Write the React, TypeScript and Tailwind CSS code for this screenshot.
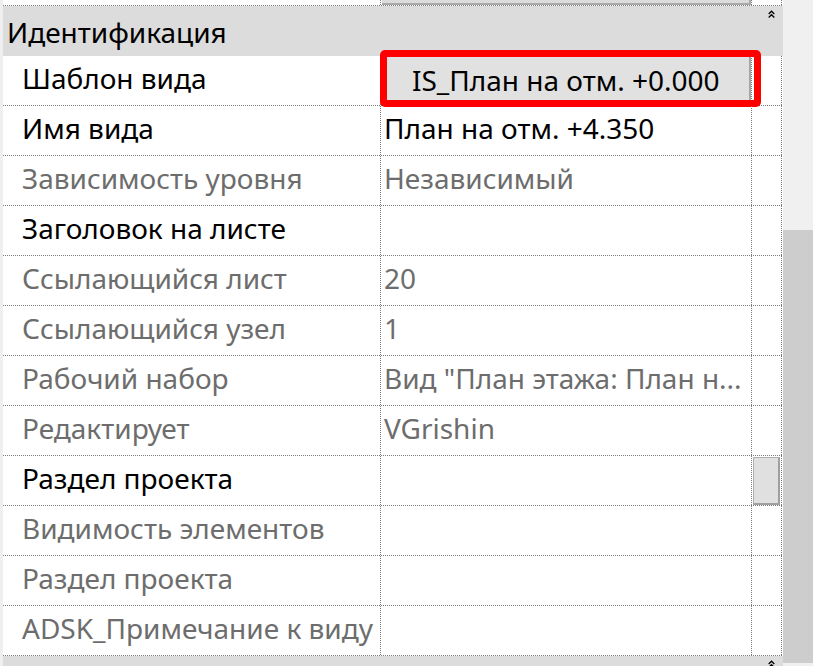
import React from 'react'

type Row = {
  label: string
  value?: string
  readOnly?: boolean
  template?: boolean
  thumb?: boolean
}

const rows: Row[] = [
  { label: 'Шаблон вида', value: 'IS_План на отм. +0.000', template: true },
  { label: 'Имя вида', value: 'План на отм. +4.350' },
  { label: 'Зависимость уровня', value: 'Независимый', readOnly: true },
  { label: 'Заголовок на листе' },
  { label: 'Ссылающийся лист', value: '20', readOnly: true },
  { label: 'Ссылающийся узел', value: '1', readOnly: true },
  { label: 'Рабочий набор', value: 'Вид "План этажа: План н...', readOnly: true },
  { label: 'Редактирует', value: 'VGrishin', readOnly: true },
  { label: 'Раздел проекта', thumb: true },
  { label: 'Видимость элементов', readOnly: true },
  { label: 'Раздел проекта', readOnly: true },
  { label: 'ADSK_Примечание к виду', readOnly: true },
]

function Chevrons() {
  return (
    <svg width="7" height="8" viewBox="0 0 7 8" fill="none" stroke="#000" strokeWidth="1.3">
      <polyline points="0.7,4 3.5,1.2 6.3,4" />
      <polyline points="0.7,7.5 3.5,4.7 6.3,7.5" />
    </svg>
  )
}

function PropRow({ row }: { row: Row }) {
  const color = row.readOnly ? 'text-[#6d6d6d]' : 'text-black'
  return (
    <div className="flex h-[50px] border-b border-dotted border-[#7a7a7a]">
      <div className={`w-[378px] shrink-0 flex items-center pl-[19px] pb-[5px] border-r border-dotted border-[#7a7a7a] whitespace-nowrap ${color}`}>
        {row.label}
      </div>
      <div className="w-[371px] shrink-0 relative flex items-center pb-[5px] border-r border-dotted border-[#7a7a7a]">
        {row.template ? (
          <>
            <div className="absolute left-[1px] right-0 top-0 bottom-[1px] bg-[#e1e1e1] border-r-2 border-b-2 border-[#a5a5a5] pl-[30px] pt-[10px] text-black whitespace-nowrap">
              {row.value}
            </div>
            <div className="absolute left-[-1px] top-[-6px] w-[381px] h-[57px] border-[7px] border-[#ff0000] rounded-[5px]" />
          </>
        ) : (
          <span className={`pl-[3px] whitespace-nowrap ${color}`}>{row.value}</span>
        )}
      </div>
      <div className="w-[30px] shrink-0 border-r border-dotted border-[#7a7a7a] flex flex-col">
        {row.thumb && (
          <div className="mt-[1px] ml-[1px] mr-[1px] h-[48px] bg-[#e0e0e0] border border-[#b0b0b0] border-r-2 border-b-2 border-r-[#a0a0a0] border-b-[#a0a0a0]" />
        )}
      </div>
    </div>
  )
}

export default function App() {
  return (
    <div className="w-[813px] h-[666px] overflow-hidden flex bg-white text-[28px] leading-[28px]" style={{ fontFamily: '"Noto Sans", "Open Sans", sans-serif' }}>
      <div className="w-[3px] shrink-0 bg-[#efefef]" />

      <div className="w-[780px] shrink-0 flex flex-col">
        {/* row cut off above the group */}
        <div className="flex h-[6px] shrink-0 border-b border-dotted border-[#7a7a7a] w-[779px]">
          <div className="w-[378px] shrink-0 border-r border-dotted border-[#7a7a7a]" />
          <div className="w-[371px] shrink-0 border-r border-dotted border-[#7a7a7a] pl-[1px]">
            <div className="h-[5px] bg-[#dcdcdc] border-b-2 border-r-2 border-[#a8a8a8]" />
          </div>
          <div className="w-[30px] shrink-0 border-r border-dotted border-[#7a7a7a]" />
        </div>

        {/* group header */}
        <div className="h-[50px] shrink-0 bg-[#dcdcdc] flex items-start justify-between">
          <span className="pl-[4px] pt-[12px] text-black">Идентификация</span>
          <span className="pt-[4px] pr-[8px] leading-none"><Chevrons /></span>
        </div>

        <div className="w-[779px] shrink-0">
          {rows.map((r, i) => (
            <PropRow key={i} row={r} />
          ))}
        </div>

        {/* next group header, clipped */}
        <div className="h-[12px] shrink-0 bg-[#dcdcdc] flex justify-end">
          <span className="pt-[4px] pr-[8px] leading-none"><Chevrons /></span>
        </div>
      </div>

      {/* outer scrollbar */}
      <div className="w-[30px] shrink-0 flex flex-col bg-[#f0f0f0]">
        <div className="h-[230px] shrink-0" />
        <div className="h-[433px] shrink-0 bg-[#cdcdcd]" />
      </div>
    </div>
  )
}
